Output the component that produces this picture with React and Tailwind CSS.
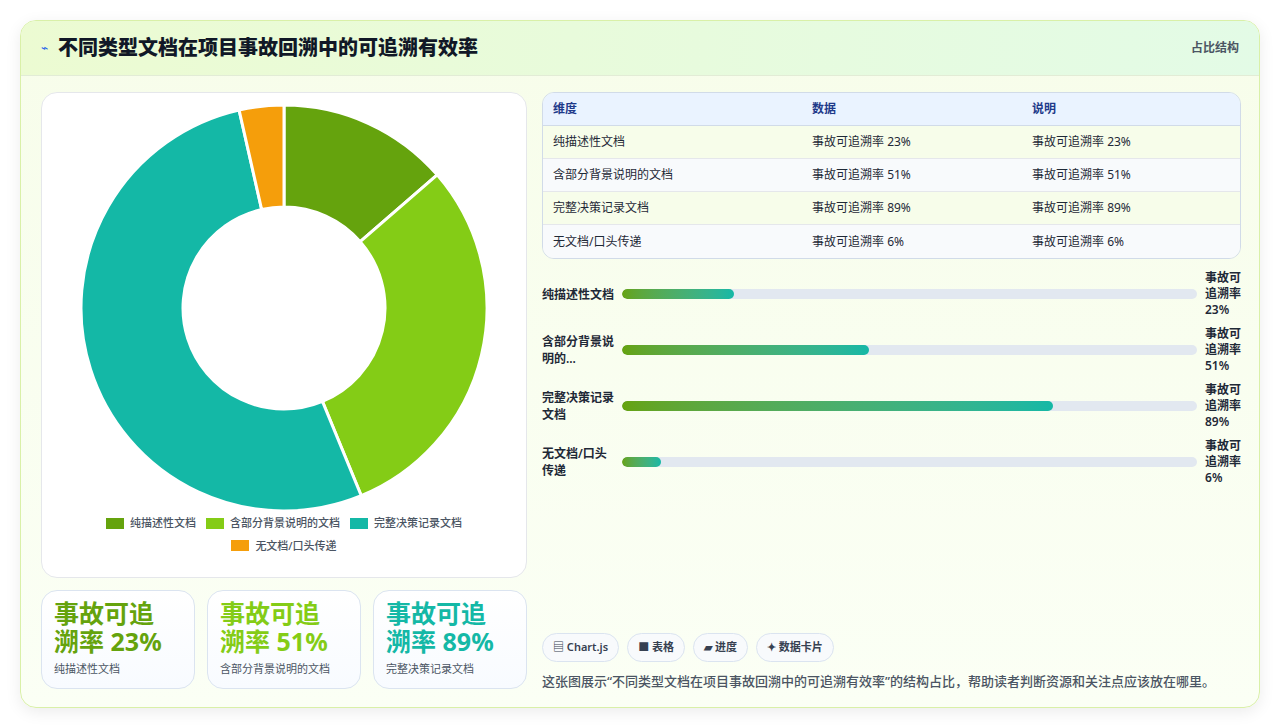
import React from "react";

const data = [
  { n: "纯描述性文档", short: "纯描述性文档", v: 23, c: "#65a30d", w: 19.4 },
  { n: "含部分背景说明的文档", short: "含部分背景说明的...", v: 51, c: "#84cc16", w: 43 },
  { n: "完整决策记录文档", short: "完整决策记录文档", v: 89, c: "#14b8a6", w: 75 },
  { n: "无文档/口头传递", short: "无文档/口头传递", v: 6, c: "#f59e0b", w: 6.8 },
];

function Donut() {
  const total = data.reduce((a, b) => a + b.v, 0);
  const cx = 205, cy = 205, R = 203, r = 101;
  let a0 = -Math.PI / 2;
  const paths = data.map((d) => {
    const a1 = a0 + (d.v / total) * Math.PI * 2;
    const large = a1 - a0 > Math.PI ? 1 : 0;
    const p = (rad, a) => `${cx + rad * Math.cos(a)} ${cy + rad * Math.sin(a)}`;
    const path = `M ${p(R, a0)} A ${R} ${R} 0 ${large} 1 ${p(R, a1)} L ${p(r, a1)} A ${r} ${r} 0 ${large} 0 ${p(r, a0)} Z`;
    a0 = a1;
    return <path key={d.n} d={path} fill={d.c} stroke="#fff" strokeWidth="3" />;
  });
  return (
    <svg width="410" height="410" viewBox="0 0 410 410">
      {paths}
    </svg>
  );
}

export default function App() {
  return (
    <div className="w-[1280px] h-[728px] bg-white p-5" style={{ fontFamily: '"Noto Sans", "Noto Sans CJK SC", sans-serif' }}>
      <div className="h-[688px] rounded-2xl border border-[#d9f0a8] bg-gradient-to-b from-[#f7fdea] to-[#fbfff5] shadow-[0_4px_16px_rgba(0,0,0,0.08)] flex flex-col overflow-hidden">
        <div className="h-[55px] flex items-center justify-between px-5 bg-gradient-to-r from-[#ecfbd2] to-[#e3fbe6] border-b border-[#e2ecd6]">
          <div className="flex items-center gap-2.5">
            <span className="text-[#2563eb] text-[12px]">⌁</span>
            <span className="text-[20px] font-extrabold text-[#111827]">不同类型文档在项目事故回溯中的可追溯有效率</span>
          </div>
          <span className="text-[12px] font-semibold text-[#4b5563]">占比结构</span>
        </div>
        <div className="flex-1 flex gap-[15px] pl-5 pr-[18px] pt-4 pb-4">
          <div className="w-[486px] flex flex-col gap-3">
            <div className="h-[486px] bg-white rounded-2xl border border-[#e5e7eb] flex flex-col items-center pt-[10px]">
              <Donut />
              <div className="mt-[2px] flex flex-wrap justify-center gap-x-2.5 gap-y-1.5 w-[400px] text-[11px] font-medium text-[#4b5563]">
                {data.map((d) => (
                  <div key={d.n} className="flex items-center gap-1.5">
                    <span className="w-[18px] h-[11px]" style={{ background: d.c }} />
                    {d.n}
                  </div>
                ))}
              </div>
            </div>
            <div className="flex gap-3">
              {data.slice(0, 3).map((d) => (
                <div key={d.n} className="flex-1 h-[99px] rounded-2xl border border-[#dbe4f0] bg-gradient-to-b from-white to-[#f8fbff] px-3 pt-2">
                  <div className="text-[25px] font-bold leading-[28px]" style={{ color: d.c }}>事故可追<br />溯率 {d.v}%</div>
                  <div className="text-[11px] text-[#4b5563] mt-1.5">{d.n}</div>
                </div>
              ))}
            </div>
          </div>
          <div className="flex-1 flex flex-col">
            <div className="rounded-xl border border-[#d1dbe8] overflow-hidden text-[12px] text-[#1f2937]">
              <div className="grid grid-cols-[259px_220px_1fr] h-[33px] items-center bg-[#eaf3ff] font-semibold text-[#1e3a8a] px-2.5 border-b border-[#d1dbe8]">
                <span>维度</span><span>数据</span><span>说明</span>
              </div>
              {data.map((d, i) => (
                <div key={d.n} className={`grid grid-cols-[259px_220px_1fr] h-[33px] items-center px-2.5 ${i % 2 === 0 ? "bg-[#f7fdea]" : "bg-[#f8fafc]"} ${i < 3 ? "border-b border-[#e5e7eb]" : ""}`}>
                  <span>{d.n}</span><span>事故可追溯率 {d.v}%</span><span>事故可追溯率 {d.v}%</span>
                </div>
              ))}
            </div>
            <div className="mt-[11px] flex flex-col gap-[8px]">
              {data.map((d) => (
                <div key={d.n} className="h-[48px] flex items-center text-[12px] font-semibold text-[#1f2937]">
                  <div className="w-[80px] leading-[17px] pr-1">{d.short}</div>
                  <div className="flex-1 h-[10px] rounded-full bg-[#e2e8f0] overflow-hidden">
                    <div className="h-full rounded-full bg-gradient-to-r from-[#65a30d] to-[#14b8a6]" style={{ width: `${d.w}%` }} />
                  </div>
                  <div className="w-[44px] pl-2 leading-[16px]">事故可<br />追溯率<br />{d.v}%</div>
                </div>
              ))}
            </div>
            <div className="flex-1" />
            <div className="flex gap-2 text-[11px] font-semibold text-[#374151]">
              {["▤ Chart.js", "■ 表格", "▰ 进度", "✦ 数据卡片"].map((t) => (
                <span key={t} className="h-[29px] px-2.5 flex items-center rounded-full border border-[#dbe4f0] bg-[#f8fafc]">{t}</span>
              ))}
            </div>
            <div className="mt-[10px] text-[13px] font-medium text-[#4b5563]">这张图展示“不同类型文档在项目事故回溯中的可追溯有效率”的结构占比，帮助读者判断资源和关注点应该放在哪里。</div>
          </div>
        </div>
      </div>
    </div>
  );
}
